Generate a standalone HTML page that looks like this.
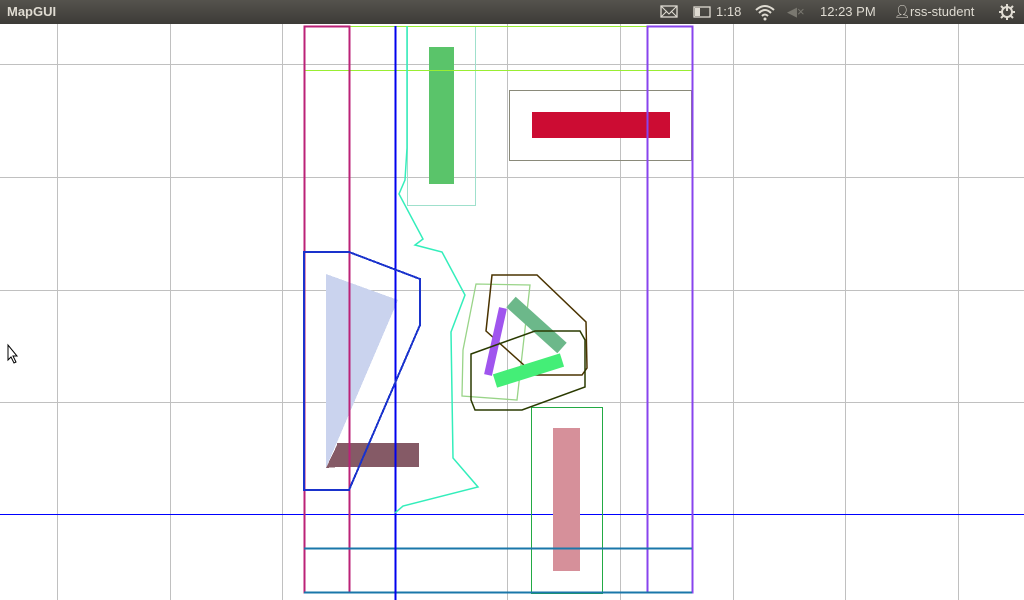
<!DOCTYPE html>
<html><head><style>
body{margin:0;width:1024px;height:600px;overflow:hidden;background:#fff;font-family:"Liberation Sans",sans-serif}
#bar{position:absolute;left:0;top:0;width:1024px;height:24px;background:linear-gradient(#55534d,#3c3b37);color:#dfdbd2;font-size:13px}
#bar span{position:absolute;top:4px}
</style></head><body>
<div id="bar">
<span style="left:7px;font-weight:bold">MapGUI</span>
<span style="left:660px;top:5px"><svg width="18" height="13"><rect x="1" y="1" width="16" height="11" fill="none" stroke="#dfdbd2" stroke-width="1.3"/><path d="M1 1L9 9L17 1M1 12L7 6M17 12L11 6" stroke="#dfdbd2" fill="none"/></svg></span>
<span style="left:693px;top:6px"><svg width="20" height="12"><rect x="1" y="1" width="16" height="10" fill="none" stroke="#dfdbd2" stroke-width="1.3"/><rect x="2" y="2" width="5" height="8" fill="#dfdbd2"/></svg></span>
<span style="left:716px">1:18</span>
<span style="left:754px;top:3px"><svg width="22" height="18"><path d="M2 7Q11 -1 20 7M5 10Q11 4 17 10M8 13Q11 10 14 13" stroke="#dfdbd2" stroke-width="2" fill="none"/><circle cx="11" cy="16" r="1.5" fill="#dfdbd2"/></svg></span>
<span style="left:787px;color:#7a7870">◀×</span>
<span style="left:820px">12:23 PM</span>
<span style="left:894px">👤︎</span>
<span style="left:910px">rss-student</span>
<span style="left:998px;top:3px"><svg width="18" height="18"><circle cx="9" cy="9" r="5" fill="none" stroke="#dfdbd2" stroke-width="2"/><path d="M9 1V8M1 9H4M14 9H17M3 3L5 5M15 3L13 5M3 15L5 13M15 15L13 13M9 14V17" stroke="#dfdbd2" stroke-width="2"/></svg></span>
</div>
<svg style="position:absolute;left:0;top:24px" width="1024" height="576" viewBox="0 24 1024 576" shape-rendering="crispEdges">
<g stroke="#c0c0c0" stroke-width="1">
<path d="M57.5 24V600M170.5 24V600M282.5 24V600M507.5 24V600M620.5 24V600M733.5 24V600M845.5 24V600M958.5 24V600M0 64.5H1024M0 177.5H1024M0 290.5H1024M0 402.5H1024"/>
</g>
<path d="M0 514.5H1024" stroke="#0000ff"/>
<rect x="429" y="47" width="25" height="137" fill="#5ac46a"/>
<rect x="407.5" y="26.5" width="68" height="179" fill="none" stroke="#9fe0cc"/>
<rect x="509.5" y="90.5" width="182" height="70" fill="none" stroke="#8a8a7a"/>
<rect x="532" y="112" width="138" height="26" fill="#cc0c33"/>
<rect x="553" y="428" width="27" height="143" fill="#d6909a"/>
<rect x="531.5" y="407.5" width="71" height="186" fill="none" stroke="#22aa44"/>
<polygon points="326,274 398,300 326,468" fill="#cad3ee"/>
<rect x="337" y="443" width="82" height="24" fill="#855a66"/>
<polygon points="326,468 338,443 338,467" fill="#855a66"/>
<rect x="304.5" y="26.5" width="388" height="44" fill="none" stroke="#99ee33"/>
<rect x="304.5" y="26.5" width="45" height="566" fill="none" stroke="#bb2277" stroke-width="2"/>
<rect x="647.5" y="26.5" width="45" height="566" fill="none" stroke="#8844ee" stroke-width="2"/>
<path d="M304 548.5H692M304 592.5H692" stroke="#1a77aa" stroke-width="2"/>
<path d="M395.5 26V600" stroke="#0000ee" stroke-width="2"/>
<polygon points="304,252 349,252 420,279 420,325 349,490 304,490" fill="none" stroke="#1a33cc" stroke-width="2"/>
<polyline points="407,26 407,148 405,180 399,194 423,239 415,245 442,252 465,295 451,332 453,458 478,487 403,506 395,513" fill="none" stroke="#33eebb" stroke-width="1.5" shape-rendering="auto"/>
<g shape-rendering="auto">
<polygon points="476,284 530,285 517,400 462,396 463,350" fill="none" stroke="#99d488" stroke-width="1.3"/>
<polygon points="492,275 537,275 586,322 587,368 582,375 535,375 486,331" fill="none" stroke="#4a3300" stroke-width="1.5"/>
<path d="M503 308L488 375" stroke="#a055ee" stroke-width="8"/>
<path d="M511 302L562 348" stroke="#6cb88a" stroke-width="14"/>
<path d="M495 381L562 360" stroke="#44ee77" stroke-width="14"/>
<polygon points="471,354 535,331 580,331 585,340 585,387 522,410 475,410 471,400" fill="none" stroke="#2a3a00" stroke-width="1.5"/>
<path d="M8 345V360L11 357L14 363L16 362L13 356L17 356Z" fill="#fff" stroke="#000" stroke-width="1"/>
</g>
</svg>
</body></html>
